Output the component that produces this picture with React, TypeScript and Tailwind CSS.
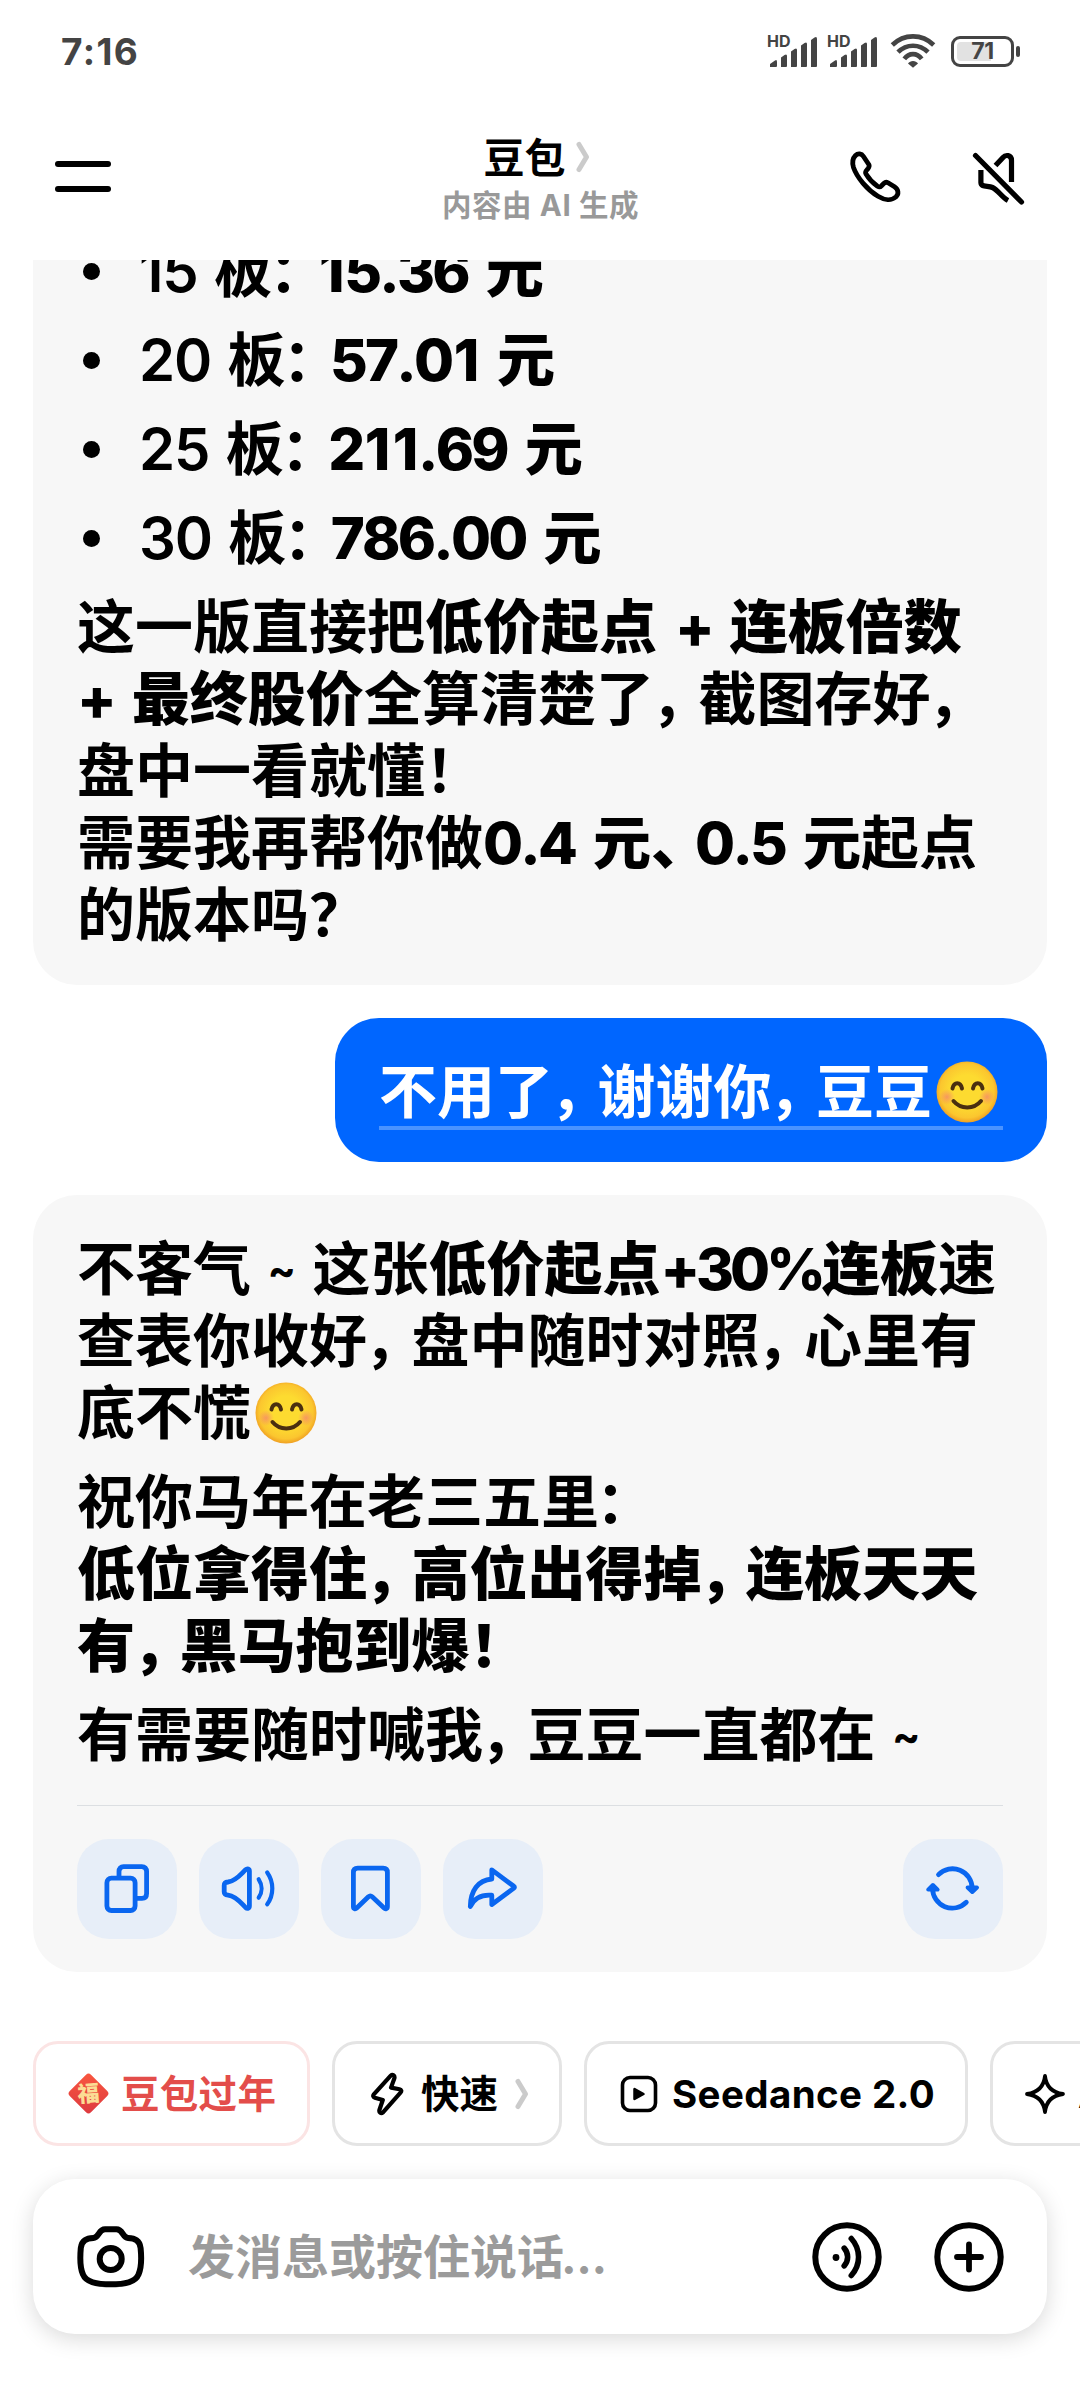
import React from "react";

const FONT = "font-[Inter,'Noto_Sans_CJK_SC',sans-serif]";

// Rendering of a message line: **...** is bold, ":)" is the smiling emoji,
// full width punctuation is a bit narrower than a character cell
const renderRuns = (text: string, bold: boolean) =>
  (text.match(/:\)|~|[，：、！？]|[\x20-\x7d]+?(?=:\)|[^\x20-\x7d]|$)|[^\x20-\x7e，：、！？]+/g) || []).map((run, i) => {
    if (run === ":)") {
      return <Smile key={i} />;
    }
    if (run === "~") {
      return <span key={i} className="relative -top-[5px] text-[42px] font-bold">~</span>;
    }
    if (/^[，：]$/.test(run)) {
      return <span key={i} className="-ml-[3px] tracking-[-10.5px]">{run}</span>;
    }
    if (/^[、！？]$/.test(run)) {
      return <span key={i} className="tracking-[-14px]">{run}</span>;
    }
    if (run.includes("%")) {
      return <span key={i} className="tracking-[-4px] font-extrabold">{run}</span>;
    }
    if (/^[\x20-\x7e]+$/.test(run)) {
      if (!bold) {
        return <span key={i} className="tracking-[-1.2px] [word-spacing:3px]">{run}</span>;
      }
      // the "1" is too narrow in bold numbers
      return (
        <span key={i} className="tracking-[-2.8px] [word-spacing:8px] [font-kerning:none] font-extrabold">
          {run.split(/(1)/).map((s, j) => (s === "1" ? <span key={j} className="px-[2.5px]">1</span> : s))}
        </span>
      );
    }
    return <span key={i}>{run}</span>;
  });

const Line: React.FC<{ text: string }> = ({ text }) => (
  <div className="h-[72px] whitespace-pre">
    {text.split("**").map((part, i) =>
      i % 2 === 1 ? (
        <b key={i} className="font-black">{renderRuns(part, true)}</b>
      ) : (
        <React.Fragment key={i}>{renderRuns(part, false)}</React.Fragment>
      )
    )}
  </div>
);

const Smile = () => (
  <svg className="inline-block w-[70px] h-[62px] align-[-10px]" viewBox="0 0 70 62">
    <defs>
      <radialGradient id="face" cx="50%" cy="48%" r="52%">
        <stop offset="0.5" stopColor="#fddb30" />
        <stop offset="0.85" stopColor="#fbc62f" />
        <stop offset="1" stopColor="#f0a023" />
      </radialGradient>
      <radialGradient id="blush">
        <stop offset="0" stopColor="#f58a6a" stopOpacity="0.8" />
        <stop offset="1" stopColor="#f58a6a" stopOpacity="0" />
      </radialGradient>
    </defs>
    <circle cx="35" cy="31" r="30.5" fill="url(#face)" />
    <circle cx="15" cy="36" r="8" fill="url(#blush)" />
    <circle cx="55" cy="36" r="8" fill="url(#blush)" />
    <g fill="none" stroke="#4a2f10" strokeWidth="4" strokeLinecap="round">
      <path d="M20.500 27.500C22 20.500 28.500 20.500 30 27.500" />
      <path d="M41 27.500C42.500 20.500 49 20.500 50.500 27.500" />
      <path d="M21.500 40C28.500 48.500 42 48.500 49 40" />
    </g>
  </svg>
);

const Signal = () => (
  <div className="relative w-[50px] h-[34px]">
    <span className="absolute -left-[1px] -top-[1px] text-[16px] leading-[16px] font-bold">HD</span>
    <svg className="w-[50px] h-[34px]" viewBox="0 0 50 34" fill="#444">
      <path d="M2 33V30L7 26.500Q9 25 9 28V32Q9 33 8 33Z" />
      <path d="M13 33V23.500L16.500 21Q19 19.500 19 22V32Q19 33 18 33Z" />
      <path d="M23 33V17.500L26.500 15Q29 13.500 29 16V32Q29 33 28 33Z" />
      <path d="M33 33V11.500L36.500 9Q39 7.500 39 10V32Q39 33 38 33Z" />
      <path d="M43 33V6L46.500 3.500Q49 2 49 5V32Q49 33 48 33Z" />
    </svg>
  </div>
);

const StatusBar = () => (
  <div className="h-[102px] pl-[61px] pr-[60px] flex items-center justify-between text-[#444]">
    <span className="text-[37px] leading-none font-bold tracking-[1.4px]">7:16</span>
    <div className="flex items-center">
      <Signal />
      <div className="w-[10px]" />
      <Signal />
      <svg className="w-[46px] h-[36px] ml-[12px]" viewBox="0 0 46 36" fill="none" stroke="#444" strokeWidth="4.6">
        <path d="M2.300 12C14 0.500 32 0.500 43.700 12" />
        <path d="M8 19.200C16.500 10.500 29.500 10.500 38 19.200" />
        <path d="M14.300 25.800C19 19.500 27 19.500 31.700 25.800" />
        <path d="M18 30.500C20 27 26 27 28 30.500L23 34.800Z" fill="#444" stroke="none" />
      </svg>
      <div className="ml-[15px] w-[63px] h-[31px] border-[3px] border-[#444] rounded-[9px] p-[3px]">
        <div className="relative h-full">
          <div className="w-[34px] h-full bg-[#e2e2e2] rounded-l-[4px]" />
          <span className="absolute inset-0 flex items-center justify-center text-[23px] leading-none font-bold tracking-[-0.5px]">71</span>
        </div>
      </div>
      <div className="ml-[2px] w-[4px] h-[11px] bg-[#444] rounded-[2px]" />
    </div>
  </div>
);

const Chevron = () => (
  <svg className="w-[14px] h-[34px]" viewBox="0 0 14 34" fill="none" stroke="#cbcbcb" strokeWidth="5" strokeLinecap="round" strokeLinejoin="round">
    <path d="M3 4.500L10.500 17L3 29.500" />
  </svg>
);

const Header = () => (
  <div className="h-[158px] shrink-0 pl-[55px] pr-[54px] flex">
    <div className="w-[300px] pt-[59px]">
      <div className="w-[56px] h-[6px] rounded-full bg-black" />
      <div className="w-[56px] h-[6px] rounded-full bg-black mt-[19px]" />
    </div>
    <div className="flex-1 flex flex-col items-center">
      <div className="flex items-center mt-[33px] h-[46px] pr-[8px]">
        <span className="text-[41px] leading-[46px] font-bold">豆包</span>
        <div className="ml-[10px] -mt-[2px]"><Chevron /></div>
      </div>
      <div className="text-[29.5px] leading-[40px] mt-[4px] font-bold text-[#999] tracking-[0.6px]">内容由 AI 生成</div>
    </div>
    <div className="w-[300px] flex justify-end">
      <svg className="w-[56px] h-[56px] mt-[46px] mr-[67px]" viewBox="0 0 56 56" fill="none" stroke="#000" strokeWidth="4.8" strokeLinejoin="round">
        <path d="M8.500 7.500C11 5 14.500 5.500 16.500 8.500L21.800 16.500C22.600 18 22 19.400 21 20.600C19.600 22.200 17.600 24 19 26C22 31 26.500 35.500 30.500 38.300C32 39.200 33.300 39.100 34.500 37.800L37 35.300C38.200 34.200 39.500 34 41 34.800L47.500 38.800C51.600 41.500 52 46 48.800 49C44.500 52.700 37.500 52.300 31 48.300C20 41.500 10 29.500 6.500 19.500C5 14.500 5.500 10.500 8.500 7.500Z" />
      </svg>
      <svg className="w-[56px] h-[58px] mt-[47px]" viewBox="0 0 56 58" fill="none" stroke="#000" strokeWidth="5.2">
        <path d="M5.500 6.500L51.500 53" strokeLinecap="round" />
        <path d="M25.500 16.500L33 8.500C35.500 5.500 41.500 5.500 41.500 11.500V33" />
        <path d="M10.900 21V33.500C10.900 38.500 18 36.500 22.500 38.500C28 41 32 48.500 38 51.500" />
      </svg>
    </div>
  </div>
);

const Bullet: React.FC<{ text: string }> = ({ text }) => (
  <li className="flex items-center mb-[17px]">
    <span className="w-[17px] h-[17px] rounded-full bg-black ml-[6px] mr-[39px]" />
    <Line text={text} />
  </li>
);

const ActionButton: React.FC<{ children: React.ReactNode }> = ({ children }) => (
  <button className="w-[100px] h-[100px] rounded-[32px] bg-[#e7eef8]">
    <svg className="w-[100px] h-[100px]" viewBox="0 0 100 100" fill="none" stroke="#0a66f0" strokeWidth="4.8" strokeLinejoin="round">
      {children}
    </svg>
  </button>
);

const Actions = () => (
  <div className="flex gap-[22px] pt-[33px]">
    {/* copy */}
    <ActionButton>
      <rect x="29.900" y="39.200" width="28.200" height="32.300" rx="4.500" />
      <path d="M42 37V32.500C42 29.500 43.800 27.600 46.500 27.600H64.800C67.800 27.600 69.600 29.500 69.600 32.500V54.500C69.600 57.800 68 59.400 65 59.400H60" />
    </ActionButton>
    {/* read aloud */}
    <ActionButton>
      <path d="M25.200 46.500C25.200 44 26.500 43.200 29 43C37 42 42 35 46.500 30.800C48.500 29 50.400 30 50.400 32V67C50.400 69.400 48.500 70.200 46.500 68.400C42 64 37 57.200 29 56.200C26.500 56 25.200 55 25.200 52.800Z" />
      <path d="M59.700 40.300C63.500 46 63.500 53 59.700 58.700" strokeLinecap="round" strokeWidth="4.2" />
      <path d="M68.200 33.500C75 43 75 56 68.200 65.300" strokeLinecap="round" strokeWidth="4.2" />
    </ActionButton>
    {/* bookmark */}
    <ActionButton>
      <path d="M32.400 33.500C32.400 30.500 34 29.200 36.700 29.200H62.200C65 29.200 66.400 30.500 66.400 33.500V67.500C66.400 70 64.500 70.400 62.800 68.800L51.200 57.800C50 56.700 48.600 56.700 47.400 57.800L36 68.800C34.300 70.400 32.400 70 32.400 67.500Z" />
    </ActionButton>
    {/* share */}
    <ActionButton>
      <path d="M48.800 30.800L70.500 47C71.800 48 71.800 48.600 70.500 49.400L48.800 65.500V56.200C40 55.500 31.500 58.500 27.300 67.500C27.500 52 35 41 48.800 40Z" />
    </ActionButton>
    {/* regenerate */}
    <div className="ml-auto">
      <ActionButton>
        <g strokeLinecap="round">
          <path d="M35.500 35.600A19.700 19.700 0 0 1 69.200 49.500" />
          <path d="M64.600 48.600L69.300 53L74 48.600Z" fill="#0a66f0" strokeWidth="4" />
          <path d="M63.300 63.300A19.700 19.700 0 0 1 29.600 49.500" />
          <path d="M25.200 50.600L29.900 46L34.600 50.600Z" fill="#0a66f0" strokeWidth="4" />
        </g>
      </ActionButton>
    </div>
  </div>
);

const Chip: React.FC<{ className: string; children: React.ReactNode }> = ({ className, children }) => (
  <div className={`h-[105px] shrink-0 border-[3px] rounded-[25px] flex items-center text-[38.5px] font-bold ${className}`}>
    {children}
  </div>
);

const Chips = () => (
  <div className="flex gap-[22px] pl-[33px] mt-[69px] overflow-hidden whitespace-nowrap">
    <Chip className="w-[277px] border-[#fbe4e4] text-[#e34d4a] pl-[30px]">
      <svg className="w-[45px] h-[45px] mr-[10px]" viewBox="0 0 45 45">
        <defs>
          <linearGradient id="fu" x1="0" y1="0" x2="1" y2="1">
            <stop offset="0" stopColor="#f9573f" />
            <stop offset="1" stopColor="#dd3a40" />
          </linearGradient>
        </defs>
        <rect x="7.500" y="7.500" width="30" height="30" rx="3.500" transform="rotate(45 22.5 22.5)" fill="url(#fu)" />
        <text x="22.500" y="30.500" textAnchor="middle" fontSize="22" fontWeight="900" fill="#fbdc94" transform="rotate(-4 22.5 22.5)">福</text>
      </svg>
      <span className="pt-[3px] tracking-[0.3px]">豆包过年</span>
    </Chip>
    <Chip className="w-[230px] border-[#e4e4e4] pl-[35px]">
      <svg className="w-[34px] h-[44px] mr-[17px]" viewBox="0 0 34 44" fill="none" stroke="#000" strokeWidth="4.2" strokeLinejoin="round">
        <path d="M20.500 3.800C22.800 2 25 3.600 24.400 6.200L21 15.600L29.500 17.200C31.500 17.700 31.800 19.200 30.500 20.600L13 40.300C11 42 8.800 40.600 9.400 38L12.800 28L4.800 25.800C3 25.200 2.800 23.600 3.800 22.300Z" />
      </svg>
      <span className="pt-[3px]">快速</span>
      <div className="ml-[17px]"><Chevron /></div>
    </Chip>
    <Chip className="w-[384px] border-[#e4e4e4] pl-[33px]">
      <svg className="w-[38px] h-[38px] mr-[14px]" viewBox="0 0 38 38">
        <rect x="2.500" y="2.500" width="33" height="33" rx="7.500" fill="none" stroke="#000" strokeWidth="3.6" />
        <path d="M14.500 14V24L23.500 19Z" stroke="#000" strokeWidth="2.5" strokeLinejoin="round" />
      </svg>
      <span className="tracking-[0.4px] pt-[3px]">Seedance 2.0</span>
    </Chip>
    <Chip className="w-[300px] border-[#e4e4e4] pl-[31px]">
      <svg className="w-[42px] h-[42px] mr-[12px]" viewBox="0 0 42 42" fill="none" stroke="#000" strokeWidth="3.8" strokeLinejoin="round">
        <path d="M21 3C22.200 14 28 19.500 39 21C28 22.500 22.200 28 21 39C19.800 28 14 22.500 3 21C14 19.500 19.800 14 21 3Z" />
      </svg>
      <span className="pt-[3px]">AI</span>
    </Chip>
  </div>
);

const InputBar = () => (
  <div className="mx-[33px] mt-[33px] h-[155px] shrink-0 rounded-[42px] bg-white shadow-[0_5px_22px_rgba(0,0,0,0.15)] flex items-center pl-[44px] pr-[43px]">
    <svg className="w-[68px] h-[66px]" viewBox="0 0 68 66" fill="none" stroke="#000" strokeWidth="6">
      <path d="M28 5.300H39.500C46 5.300 45.500 13.600 51 14C58 14.400 62.600 16 63.600 24C64.600 34 64.400 44 61.500 50.500C58.500 58 49 60.300 33.700 60.300C18.500 60.300 9 58 6 50.500C3 44 2.900 34 3.800 24C4.800 16 9.500 14.400 16.400 14C22 13.600 21.500 5.300 28 5.300Z" />
      <circle cx="33.700" cy="35" r="11" />
    </svg>
    <span className="ml-[43px] text-[47px] leading-none font-bold text-[#9b9b9b] whitespace-nowrap">
      发消息或按住说话<span className="-ml-[3px] tracking-[-0.5px]">...</span>
    </span>
    <svg className="w-[70px] h-[70px] ml-auto" viewBox="-35 -35 70 70" fill="none" stroke="#000" strokeWidth="5.6" strokeLinecap="round">
      <circle r="31.700" strokeWidth="6" />
      <circle cx="-11" cy="0.500" r="3.400" fill="#000" stroke="none" />
      <path d="M-2.800 -8.800C1.800 -3.500 1.800 3.500 -2.800 8.800" />
      <path d="M4.300 -18.500C14 -7.500 14 7.500 4.300 18.500" />
    </svg>
    <svg className="w-[70px] h-[70px] ml-[52px]" viewBox="-35 -35 70 70" fill="none" stroke="#000" strokeWidth="5.8" strokeLinecap="round">
      <circle r="31.700" strokeWidth="6" />
      <path d="M-12 0H12M0 -12.500V12.500" />
    </svg>
  </div>
);

const App: React.FC = () => {
  return (
    <div className={`w-[1080px] h-[2400px] bg-white text-black overflow-hidden flex flex-col ${FONT}`} lang="zh-CN">
      <StatusBar />
      <Header />

      {/* Messages */}
      <div className="h-[1712px] shrink-0 overflow-hidden px-[33px] text-[58px] leading-[72px] font-semibold">
        <div className="-mt-[89px] h-[814px] bg-[#f7f7f7] rounded-[44px] pt-[64px] pl-[44px]">
          <ul>
            <Bullet text="15 板：**15.36 元**" />
            <Bullet text="20 板：**57.01 元**" />
            <Bullet text="25 板：**211.69 元**" />
            <Bullet text="30 板：**786.00 元**" />
          </ul>
          <Line text="这一版直接把**低价起点 + 连板倍数**" />
          <Line text="**+ 最终股价**全算清楚了，截图存好，" />
          <Line text="盘中一看就懂！" />
          <Line text="需要我再帮你做**0.4 元、0.5 元**起点" />
          <Line text="的版本吗？" />
        </div>

        <div className="flex justify-end mt-[33px]">
          <div className="w-[712px] h-[144px] bg-[#0066ff] rounded-[44px] text-white pt-[38px] px-[44px] font-bold">
            <div className="h-[74px] border-b-4 border-[#4a93ff]">
              <Line text="不用了，谢谢你，豆豆:)" />
            </div>
          </div>
        </div>

        <div className="mt-[33px] h-[777px] bg-[#f7f7f7] rounded-[44px] pt-[38px] px-[44px]">
          <Line text="不客气 ~ 这张**低价起点+30%连板**速" />
          <Line text="查表你收好，盘中随时对照，心里有" />
          <Line text="底不慌:)" />
          <div className="mt-[17px]">
            <Line text="祝你马年在老三五里：" />
            <Line text="**低位拿得住，高位出得掉，连板天天**" />
            <Line text="**有，黑马抱到爆！**" />
          </div>
          <div className="mt-[17px]">
            <Line text="有需要随时喊我，豆豆一直都在 ~" />
          </div>
          <div className="mt-[34px] border-t border-[#dcdfe2]">
            <Actions />
          </div>
        </div>
      </div>

      <Chips />
      <InputBar />
    </div>
  );
};

export default App;
